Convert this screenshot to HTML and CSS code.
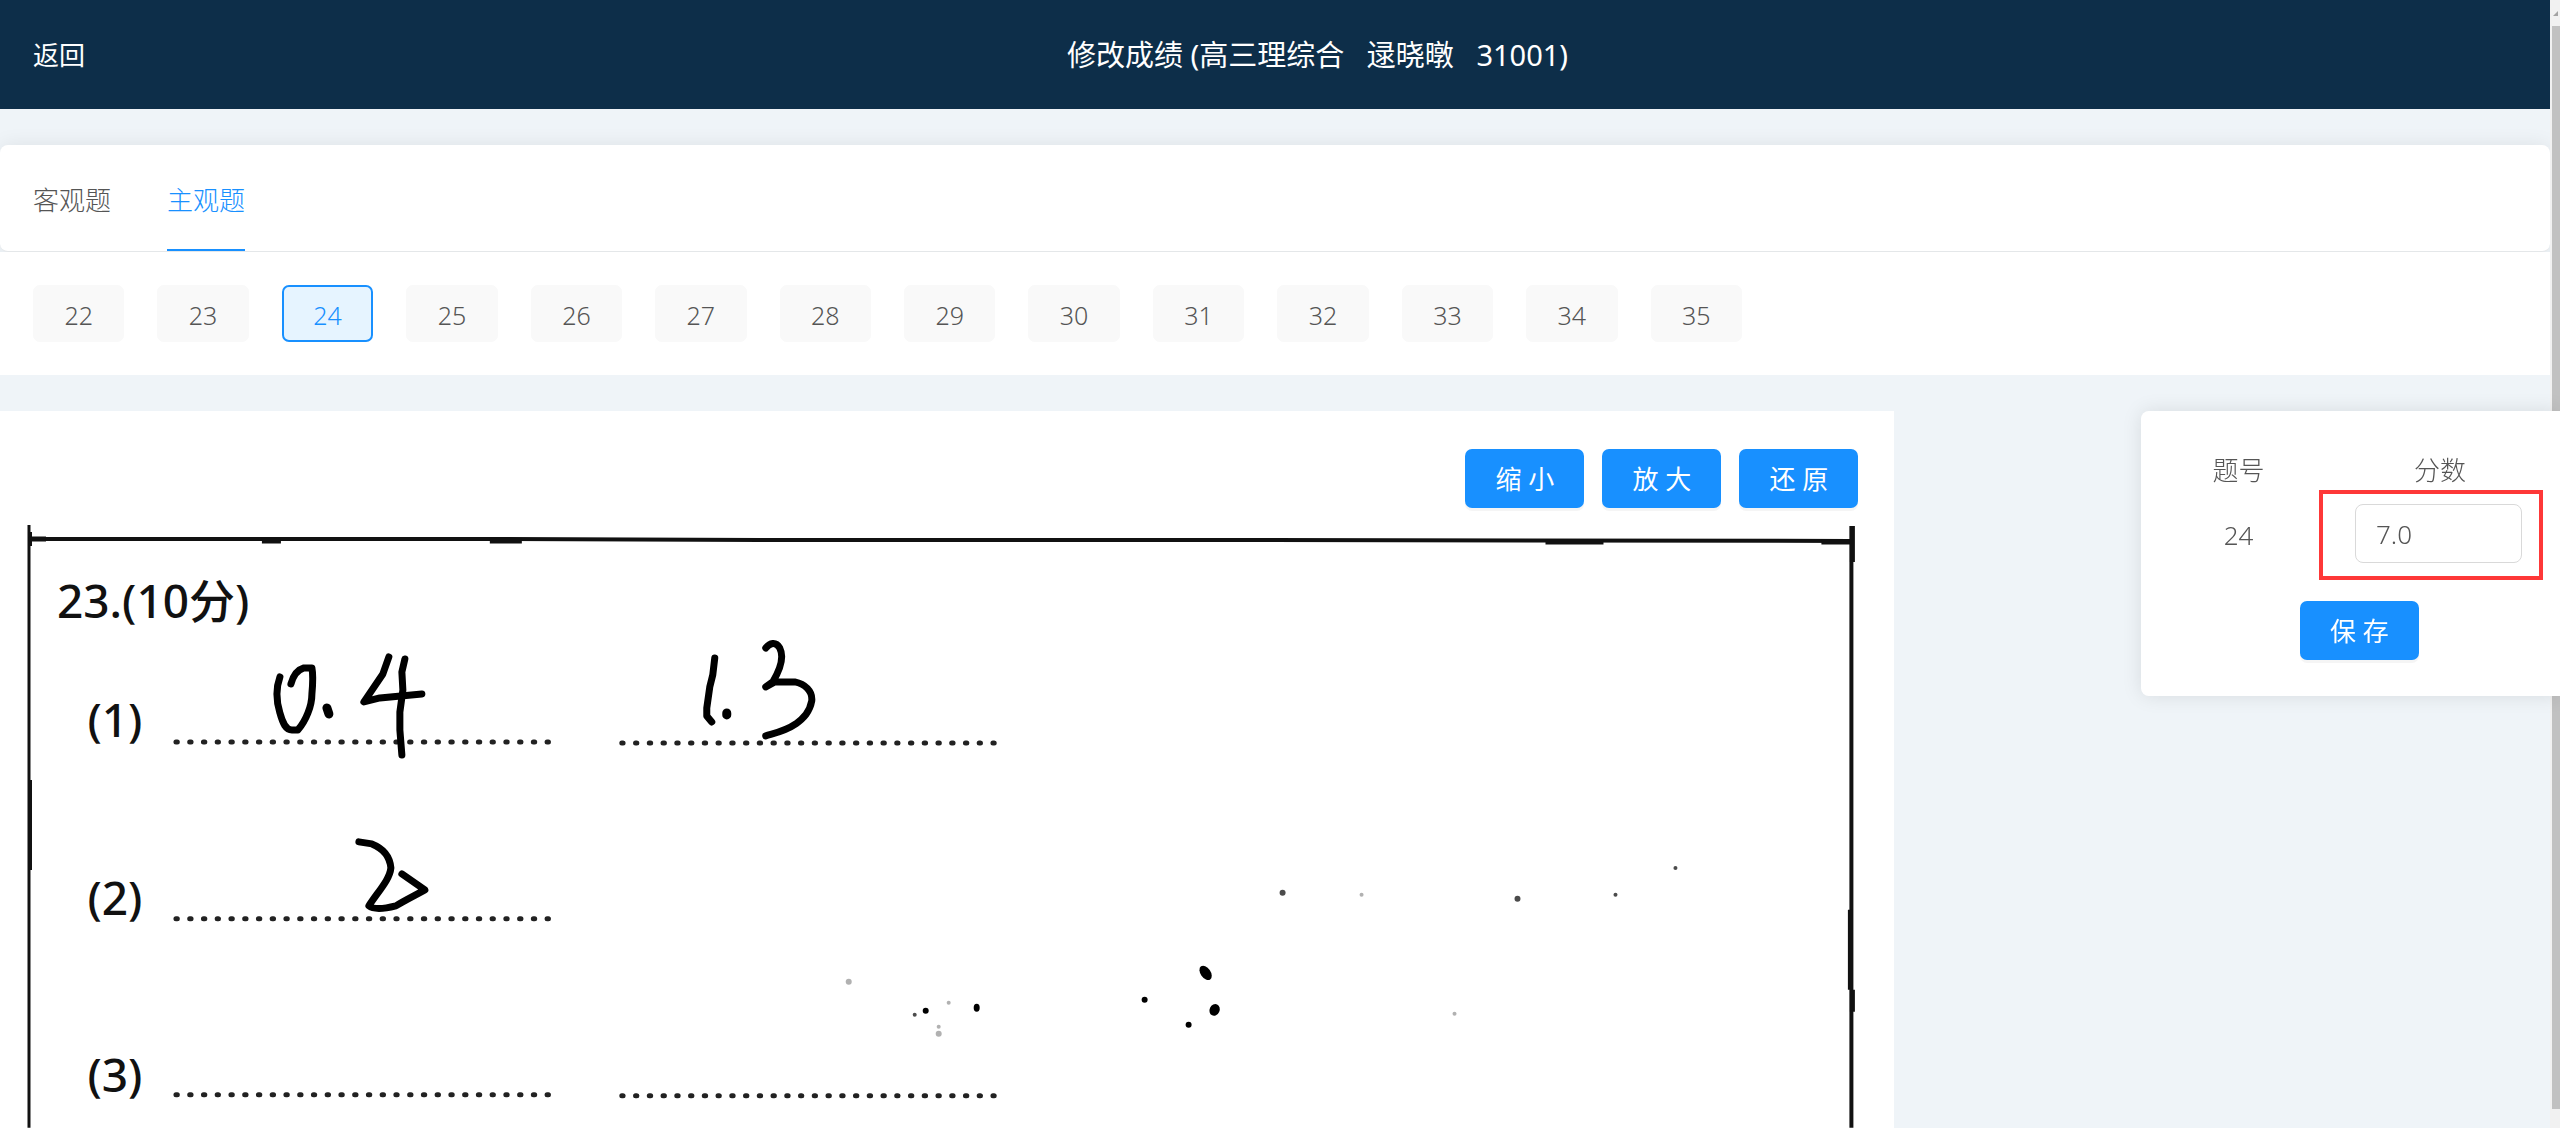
FILE: index.html
```html
<!DOCTYPE html>
<html lang="zh-CN">
<head>
  <meta charset="UTF-8" />
  <meta name="viewport" content="width=device-width, initial-scale=1" />
  <title>修改成绩</title>
  <link rel="stylesheet" href="styles.css">
</head>
<body>

  <header class="header">
    <a class="back" href="#">返回</a>
    <h1>修改成绩 (高三理综合&nbsp;&nbsp; 逯晓暾&nbsp;&nbsp; 31001)</h1>
  </header>

  <nav class="tabs">
    <a class="tab" href="#">客观题</a>
    <a class="tab active" href="#">主观题</a>
  </nav>

  <div class="questions">
    <div class="question-list">
      <button type="button">22</button>
      <button type="button">23</button>
      <button type="button" class="active">24</button>
      <button type="button">25</button>
      <button type="button">26</button>
      <button type="button">27</button>
      <button type="button">28</button>
      <button type="button">29</button>
      <button type="button">30</button>
      <button type="button">31</button>
      <button type="button">32</button>
      <button type="button">33</button>
      <button type="button">34</button>
      <button type="button">35</button>
    </div>
  </div>

  <main class="content">
    <section class="paper">
      <div class="toolbar">
        <button type="button" class="btn">缩 小</button>
        <button type="button" class="btn">放 大</button>
        <button type="button" class="btn">还 原</button>
      </div>

      <!-- Scanned answer sheet -->
      <svg class="scan" viewBox="0 508 1895 620" role="img" aria-label="答题卡">
        <g class="frame">
          <path d="M29 525V1128" stroke-width="3" />
          <path d="M30 532V546M30 780V870" stroke-width="4" />
          <path d="M29 539H46L270 539H490L760 540H1240L1852 541" stroke-width="4" />
          <path d="M29 539H46M262 541H281M490 541H522M1546 542H1604M1822 542H1852" stroke-width="5" />
          <path d="M1852 526V1128" stroke-width="4" />
          <path d="M1853 526V562M1851 910V990M1853 990V1012" stroke-width="5" />
        </g>

        <g class="print">
          <text x="57" y="618">23.(10分)</text>
          <text x="115" y="737" text-anchor="middle">(1)</text>
          <text x="115" y="915" text-anchor="middle">(2)</text>
          <text x="115" y="1092" text-anchor="middle">(3)</text>
        </g>

        <g class="blanks">
          <path pathLength="272" d="M176 742H550" />
          <path pathLength="272" d="M622 743H996" />
          <path pathLength="272" d="M176 919H550" />
          <path pathLength="272" d="M176 1095H550" />
          <path pathLength="272" d="M622 1096H996" />
        </g>

        <!-- Pen strokes -->
        <g class="ink">
          <path d="M280 677C276 688 276 700 280 713C283 724 286 730 292 730H298C306 721 312 706 312 694C313 683 313 673 312 668H304C297 670 293 677 291 684" />
          <path d="M327 708L329 714" stroke-width="9" />
          <path d="M389 657L383 674L364 702L380 698L422 694" />
          <path d="M405 659L402 672L403 690L400 712V730L402 755" />
          <path d="M715 658L713 675L710 687L707 708L707 716L712 722" />
          <path d="M727 713V715" stroke-width="9" />
          <path d="M766 648C770 643 776 641 780 648C785 658 779 672 773 682L766 687L775 682H795C805 684 813 691 812 701C810 712 804 718 796 724C786 731 776 733 766 736" />
          <path d="M359 842L372 844C382 848 390 856 391 868C390 880 377 893 369 906C374 910 384 909 396 906C404 901 416 895 425 890L402 874" />
        </g>

        <g class="specks">
          <ellipse cx="1206" cy="973" rx="5" ry="8" transform="rotate(-35 1206 973)" />
          <ellipse cx="1215" cy="1010" rx="5" ry="6" transform="rotate(25 1215 1010)" />
          <circle cx="926" cy="1011" r="3" />
          <ellipse cx="977" cy="1008" rx="3" ry="4" />
          <circle cx="1145" cy="1000" r="3" />
          <circle cx="1189" cy="1025" r="3" />
          <g opacity=".7">
            <circle cx="1283" cy="893" r="3" />
            <circle cx="1518" cy="899" r="3" />
            <circle cx="1616" cy="895" r="2" />
            <circle cx="1676" cy="868" r="2" />
            <circle cx="915" cy="1015" r="2" />
          </g>
          <g opacity=".3">
            <circle cx="849" cy="982" r="3" />
            <circle cx="939" cy="1027" r="2" />
            <circle cx="939" cy="1034" r="3" />
            <circle cx="949" cy="1003" r="2" />
            <circle cx="1362" cy="895" r="2" />
            <circle cx="1455" cy="1014" r="2" />
          </g>
        </g>
      </svg>
    </section>

    <form class="score">
      <table>
        <tr>
          <th class="number">题号</th>
          <th class="value" id="scoreLabel">分数</th>
        </tr>
        <tr>
          <td>24</td>
          <td><div class="mark"><input type="text" id="score" aria-labelledby="scoreLabel" value="7.0" /></div></td>
        </tr>
      </table>
      <button type="submit" class="btn">保 存</button>
    </form>
  </main>

  <div class="scrollbar">
    <svg class="arrow" viewBox="0 0 10 26"><path d="M3 16L8 11V16Z" fill="#a3a3a3" /></svg>
    <div class="thumb"></div>
  </div>

</body>
</html>
```

FILE: styles.css
```css
* {
  box-sizing: border-box;
}

body {
  margin: 0;
  padding-right: 10px;
  height: 100vh;
  overflow: hidden;
  background-color: #eff4f8;
  color: #555;
  font-family: "Noto Sans", "Noto Sans CJK SC", sans-serif;
  font-size: 26px;
  font-weight: 300;
  line-height: 36px;
}

button,
input {
  font: inherit;
  color: inherit;
}

button {
  cursor: pointer;
}

a {
  color: inherit;
  text-decoration: none;
}

.header {
  display: flex;
  align-items: center;
  height: 109px;
  padding-left: 33px;
  background-color: #0d2e49;
  color: #fff;
  font-weight: 400;
}

.header h1 {
  flex: 1;
  margin: 0;
  font-size: 29px;
  font-weight: 400;
  text-align: center;
}

.tabs {
  display: flex;
  gap: 56px;
  height: 107px;
  margin-top: 36px;
  padding-left: 33px;
  background-color: #fff;
  border-bottom: 1px solid #e4e7e9;
  border-radius: 8px;
  box-shadow: 0 0 20px rgba(0, 0, 0, 0.08);
}

.tab {
  padding-top: 37px;
}

.tab.active {
  color: #1890ff;
  border-bottom: 2px solid #1890ff;
}

.questions {
  position: relative;
  padding: 33px;
  background-color: #fff;
}

.question-list {
  display: grid;
  grid-template-columns: repeat(14, 1fr);
  column-gap: 33px;
  max-width: 1709px;
}

.questions button {
  height: 57px;
  padding: 2px 0 0;
  border: 1px solid #f9f9f9;
  border-radius: 7px;
  background-color: #f9f9f9;
  font-size: 25px;
}

.questions .active {
  border: 2px solid #1890ff;
  background-color: #e6f4ff;
  color: #1890ff;
}

.content {
  display: flex;
  align-items: flex-start;
  justify-content: space-between;
  margin-top: 36px;
  margin-right: -10px;
}

.paper {
  width: 74%;
  background-color: #fff;
}

.toolbar {
  display: flex;
  justify-content: flex-end;
  gap: 18px;
  padding: 38px 36px 0;
}

.btn {
  width: 119px;
  height: 59px;
  padding: 0;
  border: none;
  border-radius: 7px;
  background-color: #1890ff;
  box-shadow: 0 3px 0 rgba(0, 0, 0, 0.04);
  color: #fff;
  font-weight: 400;
}

.scan {
  display: block;
  width: 100%;
}

.frame {
  fill: none;
  stroke: #111;
}

.print {
  fill: #111;
  font-size: 46px;
  font-weight: 500;
}

.blanks {
  fill: none;
  stroke: #222;
  stroke-width: 5;
  stroke-linecap: round;
  stroke-dasharray: 1 9;
}

.ink {
  fill: none;
  stroke: #000;
  stroke-width: 7;
  stroke-linecap: round;
  stroke-linejoin: round;
}

.score {
  position: relative;
  z-index: 2;
  width: 419px;
  padding: 38px 17px 36px;
  background-color: #fff;
  border-radius: 8px 0 0 8px;
  box-shadow: 0 0 20px rgba(0, 0, 0, 0.1);
}

.score table {
  width: 100%;
  table-layout: fixed;
  border-collapse: collapse;
  text-align: center;
}

.score th,
.score td {
  padding: 0;
  font-weight: 300;
}

.score th {
  height: 41px;
}

.score .value {
  width: 224px;
  padding-left: 18px;
}

.mark {
  padding: 10px 17px 13px 32px;
  border: 4px solid #fe3838;
}

.mark input {
  width: 100%;
  height: 59px;
  padding: 0 20px;
  border: 1px solid #d9d9d9;
  border-radius: 8px;
  display: block;
}

.score .btn {
  display: block;
  margin: 21px 0 0 142px;
}

.scrollbar {
  position: fixed;
  top: 0;
  right: 0;
  bottom: 0;
  width: 10px;
  display: flex;
  flex-direction: column;
  padding-bottom: 19px;
  background-color: #f1f1f1;
}

.arrow {
  display: block;
  height: 26px;
}

.thumb {
  flex: 1;
  margin-left: 2px;
  background-color: #c1c1c1;
}
```
